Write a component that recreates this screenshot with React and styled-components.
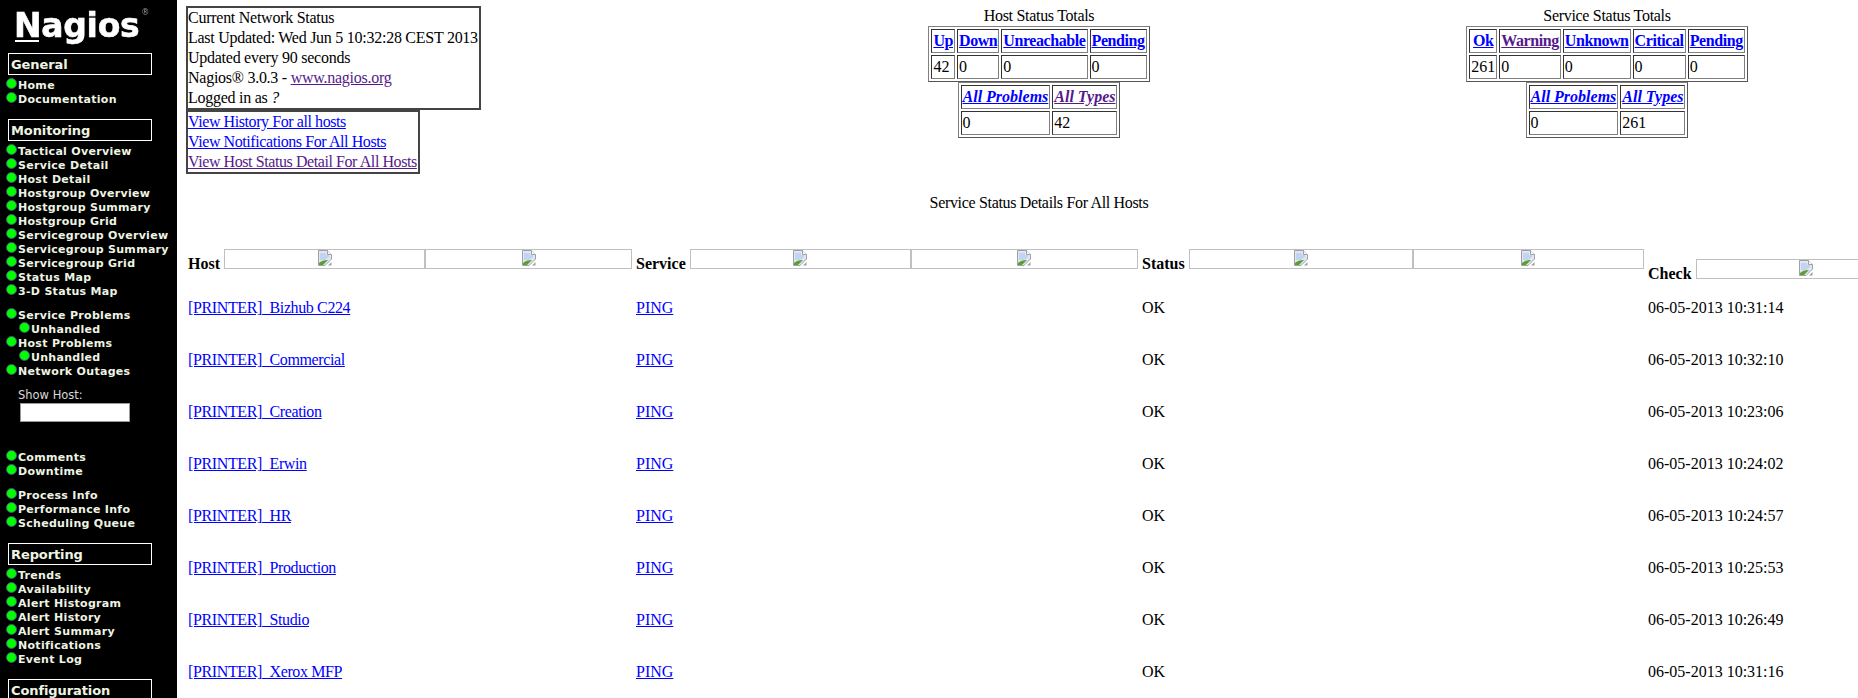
import styled, { createGlobalStyle } from "styled-components";

const GlobalStyle = createGlobalStyle`
  html, body {
    margin: 0;
    padding: 0;
    background: #fff;
    overflow: hidden;
  }
`;

const Page = styled.div`
  display: flex;
  width: 1858px;
  height: 698px;
  overflow: hidden;
  font-family: "Liberation Serif", "Times New Roman", serif;
  font-size: 16px;
  line-height: 20px;
  color: #000;
`;

/* ---- side menu ---- */

const Side = styled.nav`
  flex: 0 0 177px;
  background: #000;
  font-family: "DejaVu Sans", Verdana, sans-serif;
  color: #eef4e2;
`;

const Logo = styled.div`
  display: flex;
  align-items: flex-start;
  height: 53px;
  padding-left: 14px;
  box-sizing: border-box;
  font-size: 33px;
  line-height: 40px;
  font-weight: 700;
  letter-spacing: -0.3px;
  color: #fff;
  -webkit-text-stroke: 0.6px #fff;
  filter: blur(0.5px);
`;

const LogoCap = styled.span`
  position: relative;
  margin-top: 6px;

  &::after {
    content: "";
    position: absolute;
    left: 1px;
    top: 34px;
    width: 24px;
    height: 2px;
    background: #fff;
  }
`;

const LogoRest = styled.span`
  margin-top: 6px;
`;

const LogoMark = styled.span`
  margin: 8px 0 0 2px;
  font-size: 8px;
  line-height: 10px;
  font-weight: 400;
  letter-spacing: 0;
  color: #999;
  -webkit-text-stroke: 0;
`;

const SectionTitle = styled.div`
  width: 144px;
  height: 22px;
  margin: ${({ $first }) => ($first ? "0" : "13px")} 0 3px 8px;
  padding-left: 2px;
  box-sizing: border-box;
  border: 1px solid #fff;
  font-size: 13px;
  line-height: 22px;
  font-weight: 700;
  letter-spacing: -0.1px;
`;

const MenuGroup = styled.div`
  margin-top: ${({ $gap }) => $gap || 0}px;
`;

const MenuRow = styled.a`
  display: flex;
  height: 14px;
  padding-left: ${({ $sub }) => ($sub ? 19 : 6)}px;
  font-size: 11px;
  line-height: 16px;
  font-weight: 700;
  letter-spacing: 0.3px;
  white-space: nowrap;
`;

const Bullet = styled.span`
  flex: 0 0 11px;
  height: 11px;
  margin-right: 1px;
  box-sizing: border-box;
  border: 1.5px solid #4a5278;
  border-radius: 50%;
  background: #00ff00;
`;

const ShowHost = styled.label`
  display: block;
  margin: 10px 0 0 18px;
  font-size: 11.5px;
  line-height: 15px;
  color: #d8d8d8;
`;

const HostInput = styled.input`
  display: block;
  width: 110px;
  height: 19px;
  margin: 0 0 28px 20px;
  padding: 0;
  box-sizing: border-box;
  background: #fff;
  border: 1px solid #999;
`;

/* ---- main part ---- */

const Main = styled.main`
  flex: 1;
  min-width: 0;
  padding: 6px 0 0 9px;
`;

const Top = styled.div`
  display: grid;
  grid-template-columns: 536px 634px 1fr;
`;

const InfoColumn = styled.div`
  display: flex;
  flex-direction: column;
  align-items: flex-start;
`;

const InfoBox = styled.div`
  padding-right: 1px;
  border: 2px solid #444;
  white-space: nowrap;
  letter-spacing: ${({ $tight }) => ($tight ? "-0.42px" : "-0.26px")};
`;

const Line = styled.div``;

const Link = styled.a`
  color: ${({ $visited }) => ($visited ? "#551a8b" : "#0000ff")};
  text-decoration: underline;
  cursor: pointer;
`;

const TotalsColumn = styled.div`
  display: flex;
  flex-direction: column;
  align-items: center;
`;

const TotalsTitle = styled.div`
  letter-spacing: -0.3px;
`;

const TotalsTable = styled.table`
  border-spacing: 2px;
  border: 1px solid #808080;
  border-right-color: #555;
  border-bottom-color: #555;
  white-space: nowrap;
`;

const HeadCell = styled.th`
  padding: 1px;
  border: 1px solid;
  border-color: #333 #808080 #808080 #333;
  text-align: center;
  font-style: ${({ $italic }) => ($italic ? "italic" : "normal")};
  letter-spacing: ${({ $italic }) => ($italic ? "0" : "-0.42px")};
`;

const NumCell = styled.td`
  padding: 1px;
  border: 1px solid;
  border-color: #333 #808080 #808080 #333;
`;

const DetailsTitle = styled.div`
  grid-column: 2;
  margin-top: 19px;
  text-align: center;
  letter-spacing: -0.33px;
`;

const StatusTable = styled.table`
  table-layout: fixed;
  width: 1672px;
  margin-top: 34px;
  border-collapse: collapse;
`;

const Col = styled.col`
  width: ${({ $w }) => $w}px;
`;

const ColHead = styled.th`
  padding: ${({ $drop }) => ($drop ? "12px 2px 3px" : "2px 2px 3px")};
  vertical-align: top;
  text-align: left;
`;

const ColHeadInner = styled.div`
  display: flex;
  align-items: flex-start;
`;

const ColLabel = styled.span`
  padding: 5px 4px 0 0;
  margin-bottom: -5px;
`;

const SortBoxes = styled.div`
  flex: 1;
  display: grid;
  grid-template-columns: ${({ $single }) => ($single ? "218px" : "1fr 1.04fr")};
  height: 20px;
  box-sizing: border-box;
  border: 1px solid #c0c0c0;
`;

const SortBox = styled.div`
  display: flex;
  justify-content: center;
  border-left: ${({ $divider }) => ($divider ? "2px solid #c0c0c0" : "none")};
`;

const Row = styled.tr`
  height: 52px;
`;

const Cell = styled.td`
  padding: 0 2px;
  white-space: nowrap;
`;

const HostCell = styled(Cell)`
  letter-spacing: -0.38px;
`;

const BrokenImage = () => (
  <svg width="16" height="16" viewBox="0 0 16 16">
    <path d="M1.5 .5H10.5L14.5 4.5V9L8 15.5H1.5Z" fill="#dfe7f6" stroke="#a0a0a0" />
    <path d="M10.5 .5V4.5H14.5" fill="#fff" stroke="#a0a0a0" />
    <path d="M3 3H9V5H12V7L8 10H3Z" fill="#c4d3f2" />
    <path d="M2 15V13C4 11 7 10 11 10L6 15Z" fill="#5aa02c" />
    <path d="M14.5 12V15.5H11Z" fill="#a0a0a0" />
  </svg>
);

const menuTop = [
  ["Home", "Documentation"],
  [
    "Tactical Overview",
    "Service Detail",
    "Host Detail",
    "Hostgroup Overview",
    "Hostgroup Summary",
    "Hostgroup Grid",
    "Servicegroup Overview",
    "Servicegroup Summary",
    "Servicegroup Grid",
    "Status Map",
    "3-D Status Map",
  ],
];

const problems = [
  { label: "Service Problems" },
  { label: "Unhandled", sub: true },
  { label: "Host Problems" },
  { label: "Unhandled", sub: true },
  { label: "Network Outages" },
];

const reports = [
  "Trends",
  "Availability",
  "Alert Histogram",
  "Alert History",
  "Alert Summary",
  "Notifications",
  "Event Log",
];

const services = [
  ["[PRINTER]_Bizhub C224", "06-05-2013 10:31:14"],
  ["[PRINTER]_Commercial", "06-05-2013 10:32:10"],
  ["[PRINTER]_Creation", "06-05-2013 10:23:06"],
  ["[PRINTER]_Erwin", "06-05-2013 10:24:02"],
  ["[PRINTER]_HR", "06-05-2013 10:24:57"],
  ["[PRINTER]_Production", "06-05-2013 10:25:53"],
  ["[PRINTER]_Studio", "06-05-2013 10:26:49"],
  ["[PRINTER]_Xerox MFP", "06-05-2013 10:31:16"],
];

const MenuItem = ({ label, sub }) => (
  <MenuRow $sub={sub}>
    <Bullet />
    {label}
  </MenuRow>
);

const Totals = ({ title, heads, values, all }) => (
  <TotalsColumn>
    <TotalsTitle>{title}</TotalsTitle>
    <TotalsTable>
      <tbody>
        <tr>
          {heads.map(([name, visited]) => (
            <HeadCell key={name}>
              <Link $visited={visited}>{name}</Link>
            </HeadCell>
          ))}
        </tr>
        <tr>
          {values.map((value, i) => (
            <NumCell key={i}>{value}</NumCell>
          ))}
        </tr>
      </tbody>
    </TotalsTable>
    <TotalsTable>
      <tbody>
        <tr>
          <HeadCell $italic>
            <Link>All Problems</Link>
          </HeadCell>
          <HeadCell $italic>
            <Link $visited={all.visited}>All Types</Link>
          </HeadCell>
        </tr>
        <tr>
          <NumCell>0</NumCell>
          <NumCell>{all.total}</NumCell>
        </tr>
      </tbody>
    </TotalsTable>
  </TotalsColumn>
);

const SortHead = ({ label, single, drop }) => (
  <ColHead $drop={drop}>
    <ColHeadInner>
      <ColLabel>{label}</ColLabel>
      <SortBoxes $single={single}>
        <SortBox>
          <BrokenImage />
        </SortBox>
        {!single && (
          <SortBox $divider>
            <BrokenImage />
          </SortBox>
        )}
      </SortBoxes>
    </ColHeadInner>
  </ColHead>
);

const App = () => {
  return (
    <Page>
      <GlobalStyle />
      <Side>
        <Logo>
          <LogoCap>N</LogoCap>
          <LogoRest>agios</LogoRest>
          <LogoMark>®</LogoMark>
        </Logo>

        <SectionTitle $first>General</SectionTitle>
        {menuTop[0].map((label) => (
          <MenuItem key={label} label={label} />
        ))}

        <SectionTitle>Monitoring</SectionTitle>
        {menuTop[1].map((label) => (
          <MenuItem key={label} label={label} />
        ))}
        <MenuGroup $gap={10}>
          {problems.map((item, i) => (
            <MenuItem key={i} label={item.label} sub={item.sub} />
          ))}
        </MenuGroup>
        <ShowHost>Show Host:</ShowHost>
        <HostInput type="text" />
        <MenuItem label="Comments" />
        <MenuItem label="Downtime" />
        <MenuGroup $gap={10}>
          <MenuItem label="Process Info" />
          <MenuItem label="Performance Info" />
          <MenuItem label="Scheduling Queue" />
        </MenuGroup>

        <SectionTitle>Reporting</SectionTitle>
        {reports.map((label) => (
          <MenuItem key={label} label={label} />
        ))}

        <SectionTitle>Configuration</SectionTitle>
      </Side>

      <Main>
        <Top>
          <InfoColumn>
            <InfoBox>
              <Line>Current Network Status</Line>
              <Line>Last Updated: Wed Jun 5 10:32:28 CEST 2013</Line>
              <Line>Updated every 90 seconds</Line>
              <Line>
                Nagios® 3.0.3 - <Link $visited>www.nagios.org</Link>
              </Line>
              <Line>
                Logged in as <i>?</i>
              </Line>
            </InfoBox>
            <InfoBox $tight>
              <Line>
                <Link>View History For all hosts</Link>
              </Line>
              <Line>
                <Link>View Notifications For All Hosts</Link>
              </Line>
              <Line>
                <Link $visited>View Host Status Detail For All Hosts</Link>
              </Line>
            </InfoBox>
          </InfoColumn>

          <Totals
            title="Host Status Totals"
            heads={[["Up"], ["Down"], ["Unreachable"], ["Pending"]]}
            values={[42, 0, 0, 0]}
            all={{ total: 42, visited: true }}
          />
          <Totals
            title="Service Status Totals"
            heads={[["Ok"], ["Warning", true], ["Unknown"], ["Critical"], ["Pending"]]}
            values={[261, 0, 0, 0, 0]}
            all={{ total: 261 }}
          />

          <DetailsTitle>Service Status Details For All Hosts</DetailsTitle>
        </Top>

        <StatusTable>
          <colgroup>
            <Col $w={448} />
            <Col $w={506} />
            <Col $w={506} />
            <Col $w={212} />
          </colgroup>
          <thead>
            <tr>
              <SortHead label="Host" />
              <SortHead label="Service" />
              <SortHead label="Status" />
              <SortHead label="Check" single drop />
            </tr>
          </thead>
          <tbody>
            {services.map(([host, checked]) => (
              <Row key={host}>
                <HostCell>
                  <Link>{host}</Link>
                </HostCell>
                <Cell>
                  <Link>PING</Link>
                </Cell>
                <Cell>OK</Cell>
                <Cell>{checked}</Cell>
              </Row>
            ))}
          </tbody>
        </StatusTable>
      </Main>
    </Page>
  );
};

export default App;
